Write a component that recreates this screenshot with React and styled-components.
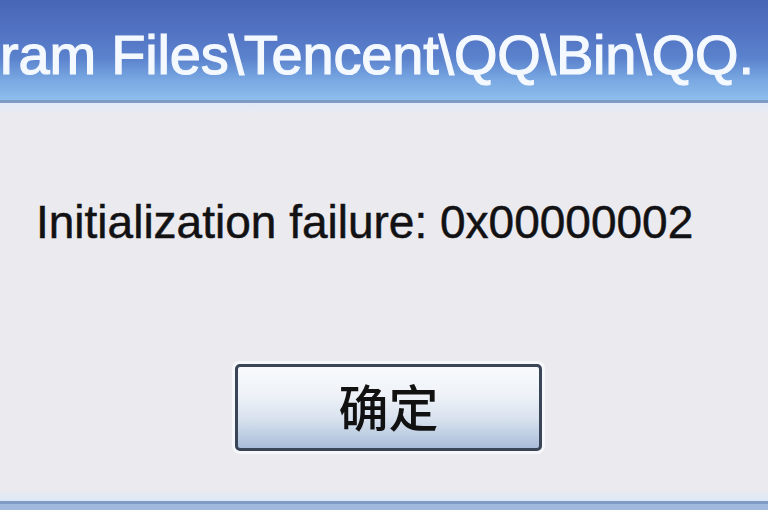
import React from 'react';
import styled, { createGlobalStyle } from 'styled-components';

const GlobalStyle = createGlobalStyle`
  html, body {
    margin: 0;
    padding: 0;
    width: 768px;
    height: 510px;
    overflow: hidden;
    background: #ebeaef;
  }
`;

const Dialog = styled.div`
  width: 768px;
  height: 510px;
  display: flex;
  flex-direction: column;
  background: #ebeaef;
  overflow: hidden;
`;

const TitleBar = styled.div`
  height: 103px;
  flex-shrink: 0;
  display: flex;
  align-items: flex-start;
  padding-top: 27px;
  box-sizing: border-box;
  background: linear-gradient(
    to bottom,
    #4966b6 0%,
    #5172c2 30%,
    #5b82cd 58%,
    #79a8e2 80%,
    #8ebdee 100%
  );
  border-bottom: 3px solid #7e9bc3;
  overflow: hidden;
`;

const TitleText = styled.span`
  font-family: 'Liberation Sans', Arial, sans-serif;
  font-size: 56px;
  letter-spacing: -0.2px;
  color: #f4f8ff;
  -webkit-text-stroke: 1.2px #f4f8ff;
  white-space: nowrap;
  line-height: 1;
`;

const Body = styled.div`
  flex: 1;
  display: flex;
  flex-direction: column;
  background: linear-gradient(to bottom, #e2eaf7 0px, #ebeaef 12px);
`;

const Message = styled.p`
  margin: 96px 0 0 36px;
  font-family: 'Liberation Sans', Arial, sans-serif;
  font-size: 46px;
  line-height: 1;
  color: #121214;
  -webkit-text-stroke: 0.5px #121214;
`;

const ButtonRow = styled.div`
  display: flex;
  justify-content: flex-start;
  padding-left: 235px;
  margin-top: 119px;
`;

const Button = styled.button`
  width: 307px;
  height: 87px;
  box-sizing: border-box;
  border: 3px solid #3a4558;
  border-radius: 5px;
  background: linear-gradient(
    to bottom,
    #f8fafd 0%,
    #eef2f8 35%,
    #d7e1ee 65%,
    #a9bdd9 100%
  );
  box-shadow: 0 0 0 3px #f6f7fb;
  font-family: 'Noto Sans CJK SC', 'Liberation Sans', sans-serif;
  font-size: 50px;
  font-weight: 500;
  color: #111;
  padding: 0 0 6px;
  display: flex;
  align-items: center;
  justify-content: center;
`;

const Footer = styled.div`
  margin-top: auto;
  height: 20px;
  display: flex;
  flex-direction: column;
`;

const FooterGlow = styled.div`
  height: 11px;
  background: linear-gradient(to bottom, #ebeaef, #dce9f8);
`;

const FooterEdge = styled.div`
  flex: 1;
  background: #a2b9de;
  border-top: 3px solid #7f9bc3;
`;

export default function App() {
  return (
    <>
      <GlobalStyle />
      <Dialog>
        <TitleBar>
          <TitleText>ram Files\Tencent\QQ\Bin\QQ.</TitleText>
        </TitleBar>
        <Body>
          <Message>Initialization failure: 0x00000002</Message>
          <ButtonRow>
            <Button>确定</Button>
          </ButtonRow>
          <Footer>
            <FooterGlow />
            <FooterEdge />
          </Footer>
        </Body>
      </Dialog>
    </>
  );
}
